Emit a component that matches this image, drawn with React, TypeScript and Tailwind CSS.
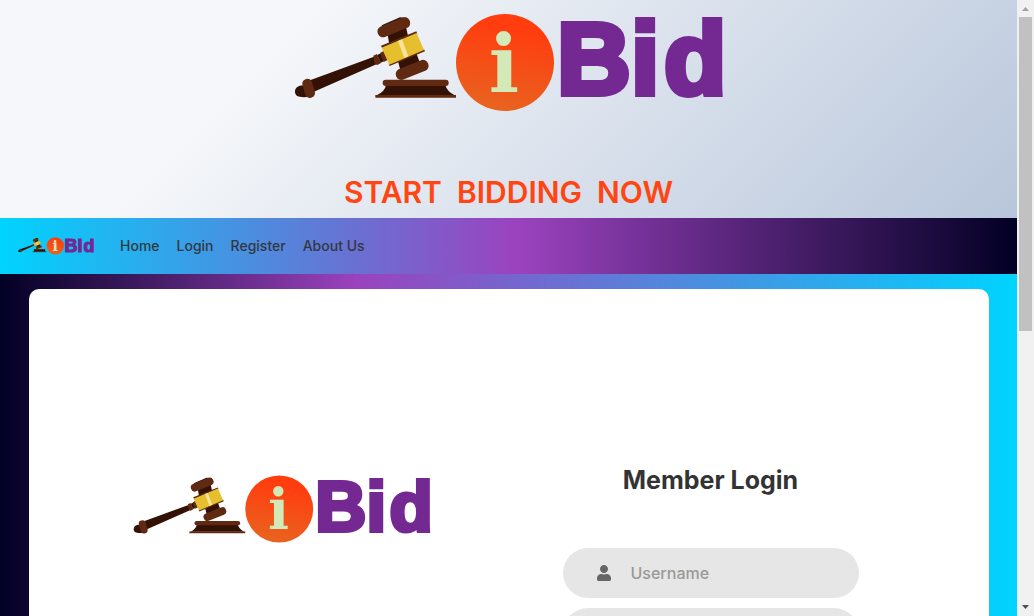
import { useId } from "react";

function Logo({ className }: { className: string }) {
  const fill = useId();
  return (
    <svg viewBox="0 0 430 100" className={`overflow-visible ${className}`} role="img" aria-label="iBid">
      <defs>
        <linearGradient id={fill} x1="0.6" y1="0" x2="0.4" y2="1">
          <stop offset="0.15" stopColor="#ff3d0f" />
          <stop offset="1" stopColor="#e8641f" />
        </linearGradient>
      </defs>
      <g transform="translate(-14 -12) scale(0.33333)">
        <path d="M92 240L282 170L291 192L100 276Z" fill="#331105" />
        <path d="M80 256C55 253 44 263 45 276C46 289 57 293 84 291Z" fill="#331105" />
        <rect x="71" y="236" width="30" height="58" rx="14" transform="rotate(-16 86 265)" fill="#602911" />
        <path d="M280 167L291 162L303 189L292 195L284 191Z" fill="#602911" />
        <path d="M292 165L304 159L314 182L302 188Z" fill="#331105" />
        <path d="M301 158L311 153L323 180L311 186Q304 174 301 158Z" fill="#602911" />
        <path d="M323 104L378 80L384 108L328 134Z" fill="#331105" />
        <path d="M354 184L410 162L420 190L362 214Z" fill="#331105" />
        <path d="M305 76L360 52L382 54L374 72L310 88Z" fill="#331105" />
        <rect x="290" y="65" width="103" height="34" rx="16" transform="rotate(-22 341 82)" fill="#602911" />
        <rect x="345" y="193" width="103" height="34" rx="16" transform="rotate(-22 396 210)" fill="#602911" />
        <path d="M303 137L409 94L412 101L306 144Z" fill="#602911" />
        <path d="M326 192L432 148L435 154L329 198Z" fill="#602911" />
        <path d="M305 143L410 99L432 150L328 194Z" fill="#e6bf2e" />
        <path d="M354 123L366 118L385 169L373 174Z" fill="#f6e49a" />
        <path d="M318 256H496Q502 276 524 286H290Q314 276 318 256Z" fill="#331105" />
        <rect x="308" y="239" width="198" height="19" rx="9" fill="#602911" />
        <path d="M286 285H528V293H286Z" fill="#602911" />
      </g>
      <ellipse cx="211" cy="50.5" rx="49" ry="48.5" fill={`url(#${fill})`} />
      <text x="210" y="79.5" fontSize="80" textAnchor="middle" className="fill-[#d3e9b8] font-['DejaVu_Serif'] font-bold">
        i
      </text>
      <text
        y="82"
        fontSize="102"
        strokeWidth="6"
        className="fill-[#732892] stroke-[#732892] font-['Liberation_Sans',sans-serif] font-bold"
      >
        <tspan x="263">B</tspan>
        <tspan x="337">i</tspan>
        <tspan x="370">d</tspan>
      </text>
    </svg>
  );
}

const links = ["Home", "Login", "Register", "About Us"];

function Scrollbar() {
  return (
    <div className="flex w-[17px] shrink-0 flex-col items-center bg-[#f1f1f1]" aria-hidden="true">
      <svg className="h-[17px] w-[17px] shrink-0" viewBox="0 0 17 17">
        <path d="M5 11H12L8.5 7Z" fill="#a3a3a3" />
      </svg>
      <div className="flex w-[13px] grow flex-col">
        <div className="h-[54%] bg-[#c1c1c1]" />
      </div>
      <svg className="h-[17px] w-[17px] shrink-0" viewBox="0 0 17 17">
        <path d="M5 6H12L8.5 10Z" fill="#505050" />
      </svg>
    </div>
  );
}

export default function App() {
  return (
    <div className="flex h-screen overflow-hidden font-['Inter',sans-serif]">
      <div className="flex min-w-0 grow flex-col overflow-hidden bg-[linear-gradient(90deg,#020024_0%,#9b42be_35%,#00d4ff_100%)]">
        <header className="flex shrink-0 flex-col items-center bg-[linear-gradient(315deg,#b8c6db_0%,#f5f7fa_74%)] pt-3">
          <Logo className="w-[430px]" />
          <h1 className="mt-[61px] pb-[7px] text-[30px] leading-[38px] font-semibold whitespace-pre text-[#ff4612]">
            START  BIDDING  NOW
          </h1>
        </header>

        <nav className="flex h-14 shrink-0 items-center bg-[linear-gradient(90deg,#00d4ff_0%,#9b42be_51%,#020024_100%)] px-[18px]">
          <a href="#home" className="mr-[26px] block">
            <Logo className="w-[76px]" />
          </a>
          <ul className="flex gap-[17px]">
            {links.map((label) => (
              <li key={label}>
                <a href="#" className="block text-sm font-medium text-[#333840]">
                  {label}
                </a>
              </li>
            ))}
          </ul>
        </nav>

        <main className="shrink-0 px-7 py-[15px]">
          <div className="mx-auto flex max-w-[960px] items-start justify-between rounded-[10px] bg-white pt-[177px] pr-[130px] pb-8 pl-[104px]">
            <Logo className="mt-2 w-[298px]" />
            <form className="w-[296px]">
              <h2 className="text-center text-[25px] leading-7 font-bold text-[#333333]">Member Login</h2>
              <label className="mt-[54px] flex h-[50px] items-center rounded-full bg-[#e6e6e6] pr-[30px] pl-[34px]">
                <svg viewBox="0 0 448 512" className="h-4 w-3.5 shrink-0 fill-[#666666]" aria-hidden="true">
                  <path d="M224 256c70.7 0 128-57.3 128-128S294.700 0 224 0 96 57.300 96 128s57.300 128 128 128zm89.600 32h-16.700c-22.200 10.200-46.900 16-72.900 16s-50.600-5.800-72.900-16h-16.700C60.200 288 0 348.200 0 422.400V464c0 26.500 21.500 48 48 48h352c26.500 0 48-21.500 48-48v-41.600c0-74.200-60.200-134.400-134.400-134.400z" />
                </svg>
                <input
                  type="text"
                  aria-label="Username"
                  placeholder="Username"
                  className="ml-5 w-full min-w-0 bg-transparent text-base font-medium text-[#666666] outline-none placeholder:text-[#999999]"
                />
              </label>
              <label className="mt-2.5 flex h-[50px] items-center rounded-full bg-[#e6e6e6] pr-[30px] pl-[68px]">
                <input
                  type="password"
                  aria-label="Password"
                  className="w-full min-w-0 bg-transparent text-base font-medium text-[#666666] outline-none"
                />
              </label>
            </form>
          </div>
        </main>
      </div>
      <Scrollbar />
    </div>
  );
}
